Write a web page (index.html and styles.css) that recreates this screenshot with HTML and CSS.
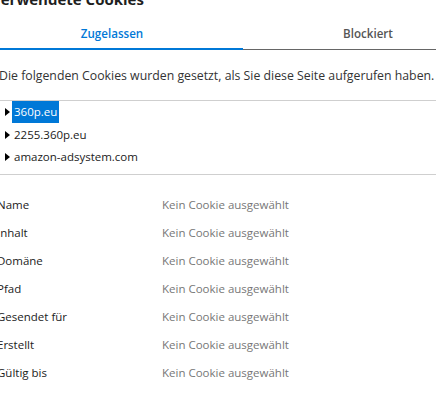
FILE: index.html
```html
<!DOCTYPE html>
<html lang="de">
<head>
<meta charset="utf-8">
<title>Verwendete Cookies</title>
<link rel="stylesheet" href="styles.css">
</head>
<body>
<div class="page">
  <h1 class="title">Verwendete Cookies</h1>
  <div class="tabs">
    <div class="tab tab-active">Zugelassen</div>
    <div class="tab tab-inactive">Blockiert</div>
  </div>
  <p class="desc">Die folgenden Cookies wurden gesetzt, als Sie diese Seite aufgerufen haben.</p>
  <div class="sep"></div>
  <ul class="tree">
    <li class="node"><span class="arrow"></span><span class="label selected">360p.eu</span></li>
    <li class="node"><span class="arrow"></span><span class="label">2255.360p.eu</span></li>
    <li class="node"><span class="arrow"></span><span class="label">amazon-adsystem.com</span></li>
  </ul>
  <div class="sep sep2"></div>
  <div class="details">
    <div class="key">Name</div><div class="val">Kein Cookie ausgewählt</div>
    <div class="key">Inhalt</div><div class="val">Kein Cookie ausgewählt</div>
    <div class="key">Domäne</div><div class="val">Kein Cookie ausgewählt</div>
    <div class="key">Pfad</div><div class="val">Kein Cookie ausgewählt</div>
    <div class="key">Gesendet für</div><div class="val">Kein Cookie ausgewählt</div>
    <div class="key">Erstellt</div><div class="val">Kein Cookie ausgewählt</div>
    <div class="key">Gültig bis</div><div class="val">Kein Cookie ausgewählt</div>
  </div>
</div>
</body>
</html>
```
FILE: styles.css
```css
html, body {
  margin: 0;
  padding: 0;
  background: #fff;
  overflow: hidden;
}
body {
  width: 436px;
  height: 402px;
  font-family: "Open Sans", "Noto Sans", sans-serif;
  font-size: 11.5px;
  color: #222;
}
.page {
  display: flex;
  flex-direction: column;
}
.title {
  margin: -11px 0 0 -9px;
  font-size: 15px;
  line-height: 20px;
  font-weight: 700;
  color: #1f1f1f;
  white-space: nowrap;
}
.tabs {
  display: flex;
  margin: 7px 0 0 -19px;
}
.tab {
  padding-top: 3px;
  line-height: 29px;
  text-align: center;
  font-weight: 600;
  font-size: 11.6px;
  flex: 0 0 auto;
}
.tab-active {
  width: 262px;
  color: #0078d7;
  border-bottom: 2px solid #0078d7;
}
.tab-inactive {
  width: 250px;
  color: #555;
  padding-bottom: 1px;
  border-bottom: 1px solid #666;
}
.desc {
  margin: 17px 0 0 -1px;
  font-size: 12.3px;
  line-height: 18px;
  color: #333;
  white-space: nowrap;
}
.sep {
  margin-top: 15px;
  height: 1px;
  background: #cfcfcf;
}
.sep2 {
  margin-top: 5px;
}
.tree {
  list-style: none;
  margin: 0;
  padding: 0;
}
.node {
  display: flex;
  align-items: center;
  height: 22.5px;
}
.arrow {
  width: 0;
  height: 0;
  margin-left: 5px;
  border-top: 4px solid transparent;
  border-bottom: 4px solid transparent;
  border-left: 5px solid #000;
}
.label {
  margin-left: 2px;
  padding: 0 2px;
  line-height: 22px;
  color: #1a1a1a;
}
.selected {
  background: #0078d7;
  color: #fff;
}
.details {
  display: grid;
  grid-template-columns: 165px auto;
  grid-auto-rows: 28px;
  align-items: center;
  margin: 16px 0 0 -3px;
}
.key {
  color: #222;
}
.val {
  color: #777;
}
```
